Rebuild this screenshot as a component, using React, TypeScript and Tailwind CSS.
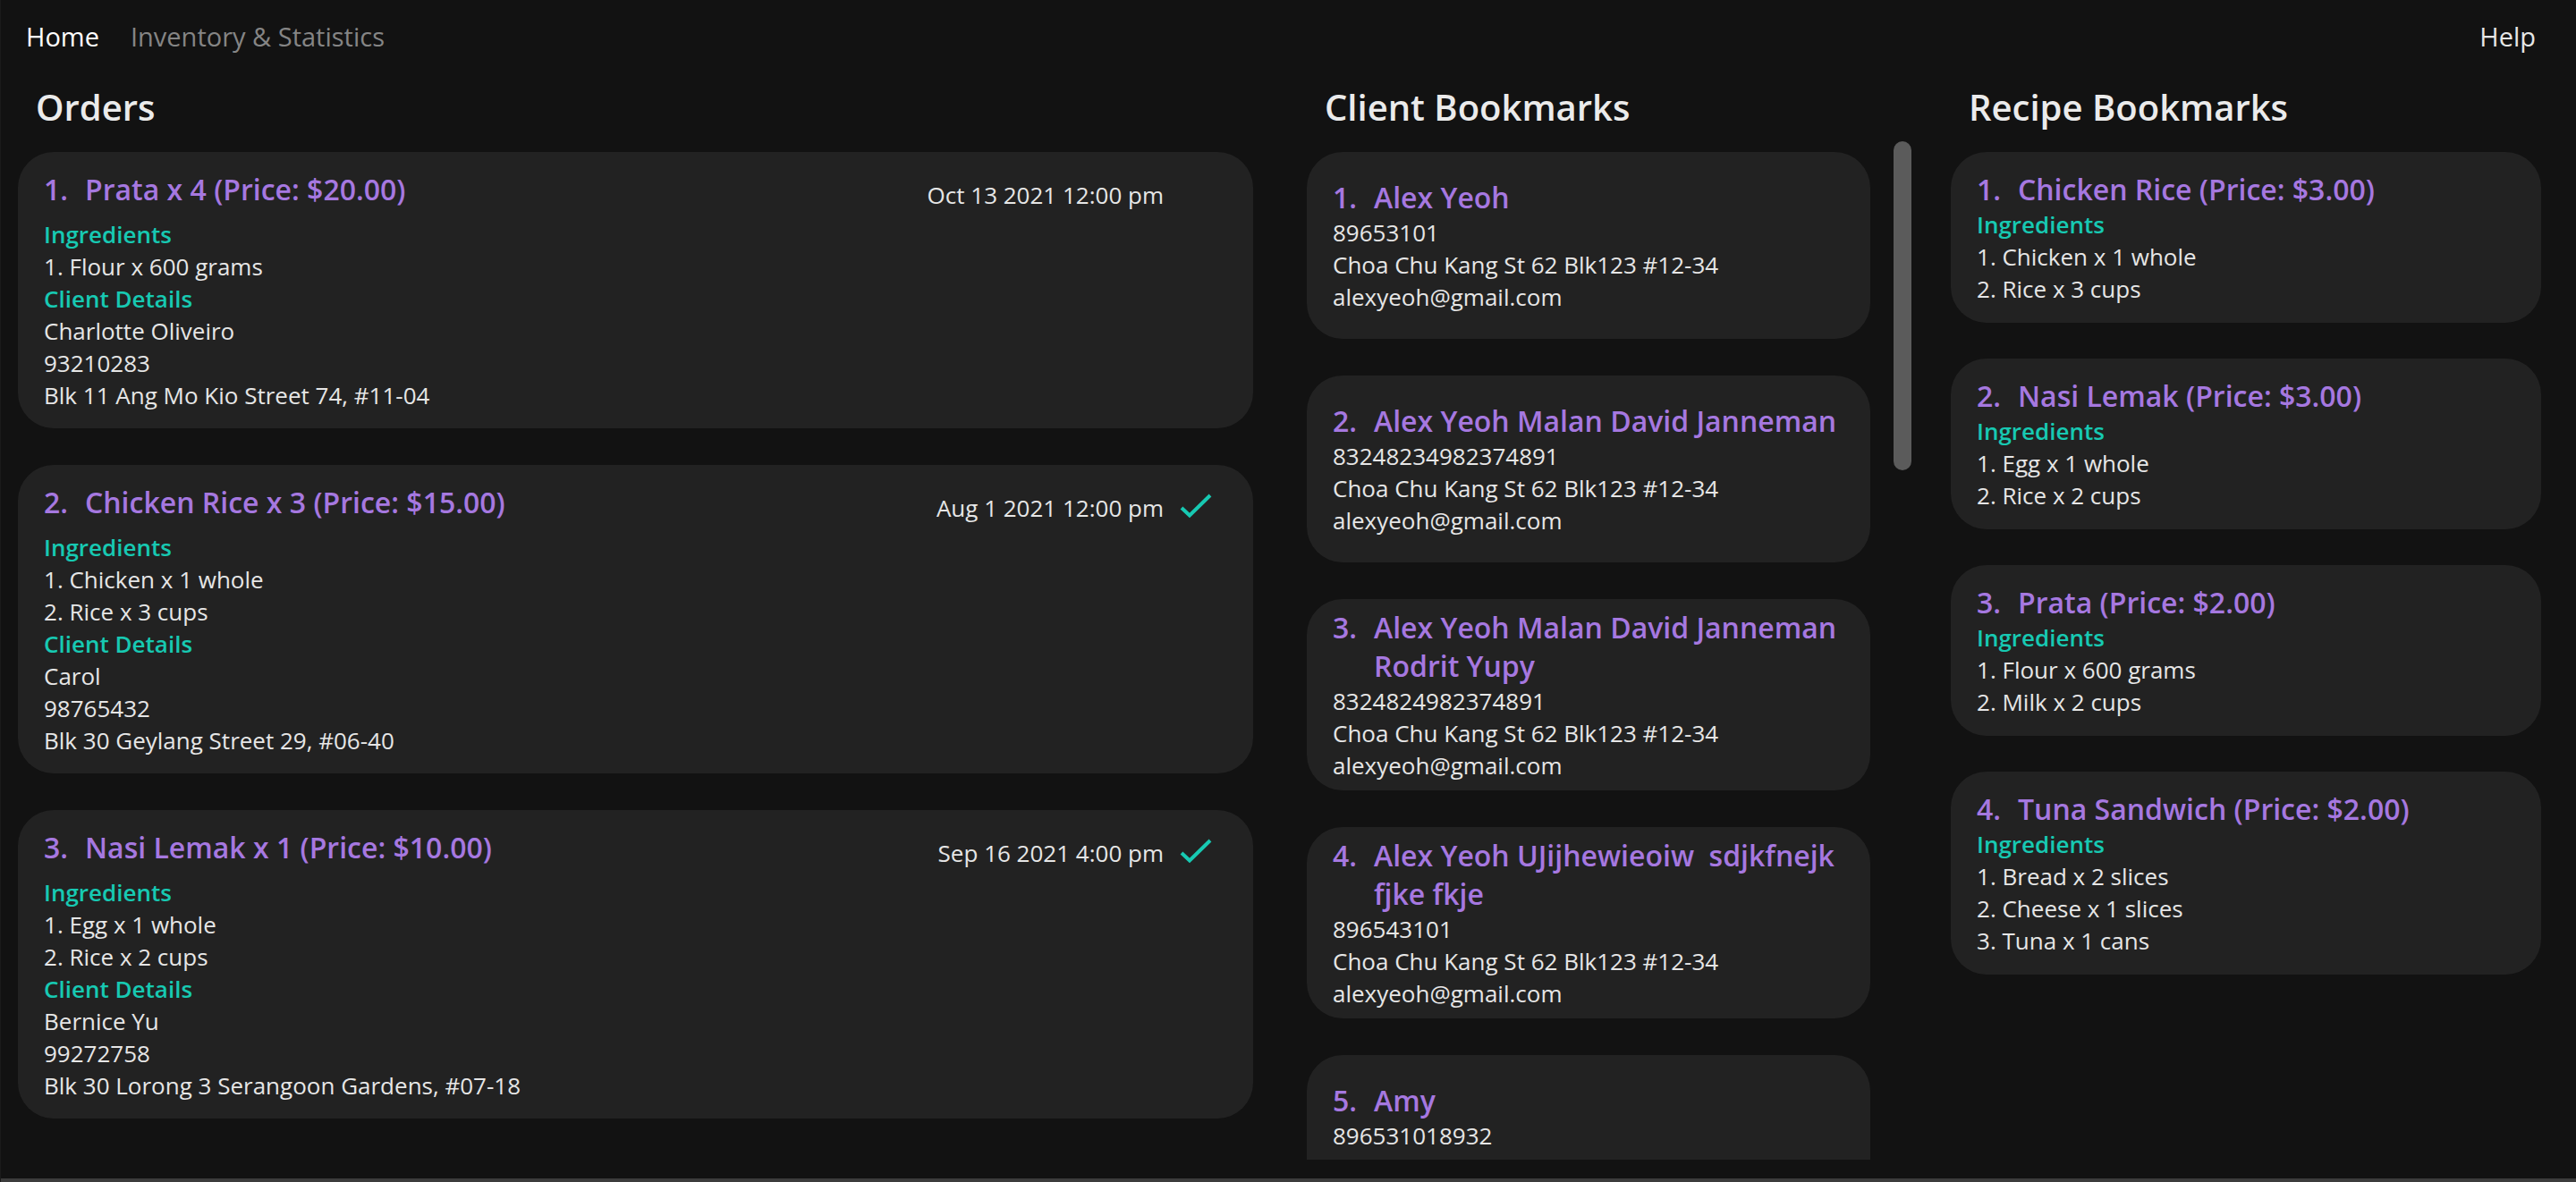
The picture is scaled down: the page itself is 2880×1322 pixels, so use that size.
import React from "react";

type Order = {
  title: string;
  date: string;
  done: boolean;
  ingredients: string[];
  client: string[];
};

const orders: Order[] = [
  {
    title: "Prata x 4 (Price: $20.00)",
    date: "Oct 13 2021 12:00 pm",
    done: false,
    ingredients: ["Flour x 600 grams"],
    client: ["Charlotte Oliveiro", "93210283", "Blk 11 Ang Mo Kio Street 74, #11-04"],
  },
  {
    title: "Chicken Rice x 3 (Price: $15.00)",
    date: "Aug 1 2021 12:00 pm",
    done: true,
    ingredients: ["Chicken x 1 whole", "Rice x 3 cups"],
    client: ["Carol", "98765432", "Blk 30 Geylang Street 29, #06-40"],
  },
  {
    title: "Nasi Lemak x 1 (Price: $10.00)",
    date: "Sep 16 2021 4:00 pm",
    done: true,
    ingredients: ["Egg x 1 whole", "Rice x 2 cups"],
    client: ["Bernice Yu", "99272758", "Blk 30 Lorong 3 Serangoon Gardens, #07-18"],
  },
];

const clients = [
  { name: "Alex Yeoh", phone: "89653101" },
  { name: "Alex Yeoh Malan David Janneman", phone: "83248234982374891" },
  { name: "Alex Yeoh Malan David Janneman Rodrit Yupy", phone: "8324824982374891" },
  { name: "Alex Yeoh UJijhewieoiw  sdjkfnejk fjke fkje", phone: "896543101" },
  { name: "Amy", phone: "896531018932" },
];

const recipes = [
  { title: "Chicken Rice (Price: $3.00)", items: ["Chicken x 1 whole", "Rice x 3 cups"] },
  { title: "Nasi Lemak (Price: $3.00)", items: ["Egg x 1 whole", "Rice x 2 cups"] },
  { title: "Prata (Price: $2.00)", items: ["Flour x 600 grams", "Milk x 2 cups"] },
  { title: "Tuna Sandwich (Price: $2.00)", items: ["Bread x 2 slices", "Cheese x 1 slices", "Tuna x 1 cans"] },
];

function Check() {
  return (
    <svg width="36" height="28" viewBox="0 0 36 28" fill="none">
      <path d="M2 16 L11 24.5 L34 2" stroke="#17c9b2" strokeWidth="4" />
    </svg>
  );
}

function Title({ n, text }: { n: number; text: string }) {
  return (
    <div className="flex text-[32px] leading-[43px] font-semibold text-[#a678e0]">
      <span className="w-[46px] shrink-0">{n}.</span>
      <span className="whitespace-pre-wrap">{text}</span>
    </div>
  );
}

function OrderCard({ o, n }: { o: Order; n: number }) {
  return (
    <div className="rounded-[40px] bg-[#222222] pl-[29px] pr-[46px] pt-[20px] pb-[19px]">
      <div className="flex items-start h-[54px]">
        <div className="flex-1">
          <Title n={n} text={o.title} />
        </div>
        <div className="mt-[10px] text-[26px] leading-[36px] text-[#e6e6e6]">{o.date}</div>
        <div className="ml-[18px] mt-[12px] w-[36px] h-[28px]">{o.done ? <Check /> : null}</div>
      </div>
      <div className="text-[26px] leading-[36px] text-[#e6e6e6]">
        <div className="font-semibold text-[#17c9b2]">Ingredients</div>
        {o.ingredients.map((it, i) => (
          <div key={i}>
            {i + 1}. {it}
          </div>
        ))}
        <div className="font-semibold text-[#17c9b2]">Client Details</div>
        {o.client.map((c, i) => (
          <div key={i}>{c}</div>
        ))}
      </div>
    </div>
  );
}

export default function App() {
  return (
    <div className="w-[2880px] h-[1322px] bg-[#121212] flex flex-col overflow-hidden font-['Open_Sans',sans-serif] border-l border-[#1b1b1b]">
      {/* nav */}
      <div className="h-[93px] pt-[21px] pl-[28px] pr-[45px] flex items-start justify-between text-[29px] leading-[40px] shrink-0">
        <div className="flex gap-[35px]">
          <span className="text-white">Home</span>
          <span className="text-[#858585]">Inventory &amp; Statistics</span>
        </div>
        <span className="text-[#e6e6e6]">Help</span>
      </div>

      {/* main */}
      <div className="flex flex-1 min-h-0 pl-[19px]">
        {/* Orders */}
        <div className="w-[1381px] flex flex-col">
          <div className="h-[54px] pl-[20px] text-[40px] leading-[54px] font-semibold text-[#ebebeb]">Orders</div>
          <div className="h-[1150px] overflow-hidden pt-[23px] flex flex-col gap-[41px]">
            {orders.map((o, i) => (
              <OrderCard key={i} o={o} n={i + 1} />
            ))}
          </div>
        </div>

        {/* Clients */}
        <div className="ml-[60px] flex flex-col">
          <div className="h-[54px] pl-[20px] text-[40px] leading-[54px] font-semibold text-[#ebebeb]">Client Bookmarks</div>
          <div className="flex h-[1150px]">
            <div className="w-[630px] overflow-hidden pt-[23px] flex flex-col gap-[41px]">
              {clients.map((c, i) => (
                <div
                  key={i}
                  className="shrink-0 min-h-[209px] rounded-[40px] bg-[#222222] pl-[29px] pr-[26px] py-[10px] flex flex-col justify-center"
                >
                  <Title n={i + 1} text={c.name} />
                  <div className="text-[26px] leading-[36px] text-[#e6e6e6]">
                    <div>{c.phone}</div>
                    <div>Choa Chu Kang St 62 Blk123 #12-34</div>
                    <div>alexyeoh@gmail.com</div>
                  </div>
                </div>
              ))}
            </div>
            <div className="ml-[26px] w-[20px] pt-[11px]">
              <div className="h-[368px] w-[20px] rounded-full bg-[#5b5b5b]" />
            </div>
          </div>
        </div>

        {/* Recipes */}
        <div className="ml-[44px] w-[660px] flex flex-col">
          <div className="h-[54px] pl-[20px] text-[40px] leading-[54px] font-semibold text-[#ebebeb]">Recipe Bookmarks</div>
          <div className="pt-[23px] flex flex-col gap-[40px]">
            {recipes.map((r, i) => (
              <div key={i} className="rounded-[40px] bg-[#222222] pl-[29px] pr-[29px] pt-[20px] pb-[20px]">
                <div className="text-[32px] leading-[44px]">
                  <Title n={i + 1} text={r.title} />
                </div>
                <div className="text-[26px] leading-[36px] text-[#e6e6e6]">
                  <div className="font-semibold text-[#17c9b2]">Ingredients</div>
                  {r.items.map((it, j) => (
                    <div key={j}>
                      {j + 1}. {it}
                    </div>
                  ))}
                </div>
              </div>
            ))}
          </div>
        </div>
      </div>

      <div className="h-[21px] shrink-0" />
      <div className="h-[4px] bg-[#3c3c3c] shrink-0" />
    </div>
  );
}
